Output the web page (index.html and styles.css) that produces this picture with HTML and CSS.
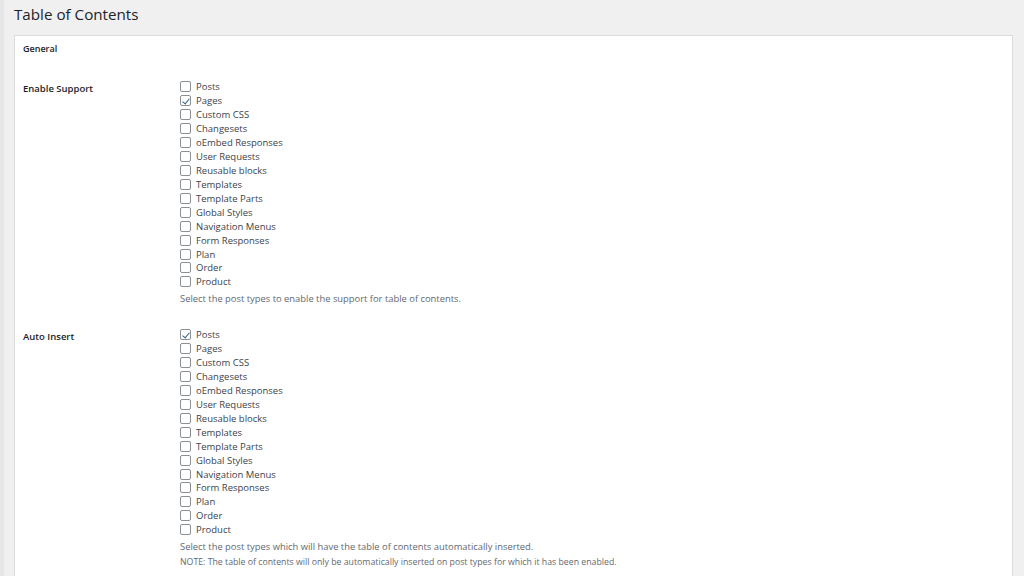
FILE: index.html
```html
<!DOCTYPE html>
<html lang="en">
<head>
<meta charset="utf-8">
<title>Table of Contents</title>
<link rel="stylesheet" href="styles.css">
</head>
<body>
<div class="wrap">
  <h1 class="page-title">Table of Contents</h1>
  <div class="postbox">
    <h2 class="postbox-title">General</h2>
    <div class="form-table">
      <div class="row">
        <div class="row-label">Enable Support</div>
        <div class="row-field">
          <label class="opt"><input type="checkbox"> Posts</label>
          <label class="opt"><input type="checkbox" checked> Pages</label>
          <label class="opt"><input type="checkbox"> Custom CSS</label>
          <label class="opt"><input type="checkbox"> Changesets</label>
          <label class="opt"><input type="checkbox"> oEmbed Responses</label>
          <label class="opt"><input type="checkbox"> User Requests</label>
          <label class="opt"><input type="checkbox"> Reusable blocks</label>
          <label class="opt"><input type="checkbox"> Templates</label>
          <label class="opt"><input type="checkbox"> Template Parts</label>
          <label class="opt"><input type="checkbox"> Global Styles</label>
          <label class="opt"><input type="checkbox"> Navigation Menus</label>
          <label class="opt"><input type="checkbox"> Form Responses</label>
          <label class="opt"><input type="checkbox"> Plan</label>
          <label class="opt"><input type="checkbox"> Order</label>
          <label class="opt"><input type="checkbox"> Product</label>
          <p class="description">Select the post types to enable the support for table of contents.</p>
        </div>
      </div>
      <div class="row">
        <div class="row-label">Auto Insert</div>
        <div class="row-field">
          <label class="opt"><input type="checkbox" checked> Posts</label>
          <label class="opt"><input type="checkbox"> Pages</label>
          <label class="opt"><input type="checkbox"> Custom CSS</label>
          <label class="opt"><input type="checkbox"> Changesets</label>
          <label class="opt"><input type="checkbox"> oEmbed Responses</label>
          <label class="opt"><input type="checkbox"> User Requests</label>
          <label class="opt"><input type="checkbox"> Reusable blocks</label>
          <label class="opt"><input type="checkbox"> Templates</label>
          <label class="opt"><input type="checkbox"> Template Parts</label>
          <label class="opt"><input type="checkbox"> Global Styles</label>
          <label class="opt"><input type="checkbox"> Navigation Menus</label>
          <label class="opt"><input type="checkbox"> Form Responses</label>
          <label class="opt"><input type="checkbox"> Plan</label>
          <label class="opt"><input type="checkbox"> Order</label>
          <label class="opt"><input type="checkbox"> Product</label>
          <p class="description">Select the post types which will have the table of contents automatically inserted.</p>
          <p class="description note">NOTE: The table of contents will only be automatically inserted on post types for which it has been enabled.</p>
        </div>
      </div>
    </div>
  </div>
</div>
</body>
</html>
```

FILE: styles.css
```css
html, body {
  margin: 0;
  padding: 0;
  height: 100%;
  overflow: hidden;
}
body {
  background: #f0f0f1;
  color: #1d2327;
  font-family: "Open Sans", "Noto Sans", "Liberation Sans", sans-serif;
  border-left: 4px solid #e6e6e7;
}
.wrap {
  padding: 0 11px 0 10px;
}
.page-title {
  margin: 0;
  padding: 3px 0 0 0;
  height: 32px;
  font-size: 15.2px;
  font-weight: 400;
  line-height: 22px;
  color: #1d2327;
}
.postbox {
  background: #fff;
  border: 1px solid #dcdcde;
  box-shadow: 0 1px 1px rgba(0,0,0,.04);
  min-height: 600px;
}
.postbox-title {
  margin: 0;
  padding: 7px 8px 6px 8px;
  font-size: 9px;
  font-weight: 600;
  line-height: 12px;
}
.form-table {
  padding: 19px 8px 0 8px;
}
.row {
  display: flex;
  margin-bottom: 22px;
}
.row-label {
  width: 157px;
  flex: none;
  font-size: 9.5px;
  font-weight: 600;
  line-height: 14px;
  padding-top: 2px;
}
.row-field {
  flex: 1;
}
.opt {
  display: flex;
  align-items: center;
  gap: 5px;
  height: 13.93px;
  font-size: 9.5px;
  color: #3c434a;
}
.opt input {
  appearance: none;
  -webkit-appearance: none;
  margin: 0;
  width: 11px;
  height: 11px;
  border: 1px solid #8c8f94;
  border-radius: 2px;
  background: #fff;
  position: relative;
  box-sizing: border-box;
}
.opt input:checked::before {
  content: "";
  position: absolute;
  left: 3px;
  top: 0.5px;
  width: 3px;
  height: 6px;
  border-right: 1.5px solid #2c5f8e;
  border-bottom: 1.5px solid #2c5f8e;
  transform: rotate(40deg);
}
.description {
  margin: 3px 0 0 0;
  font-size: 9.4px;
  line-height: 14px;
  color: #646970;
}
.description.note {
  margin-top: 1px;
  font-size: 8.75px;
}
```
